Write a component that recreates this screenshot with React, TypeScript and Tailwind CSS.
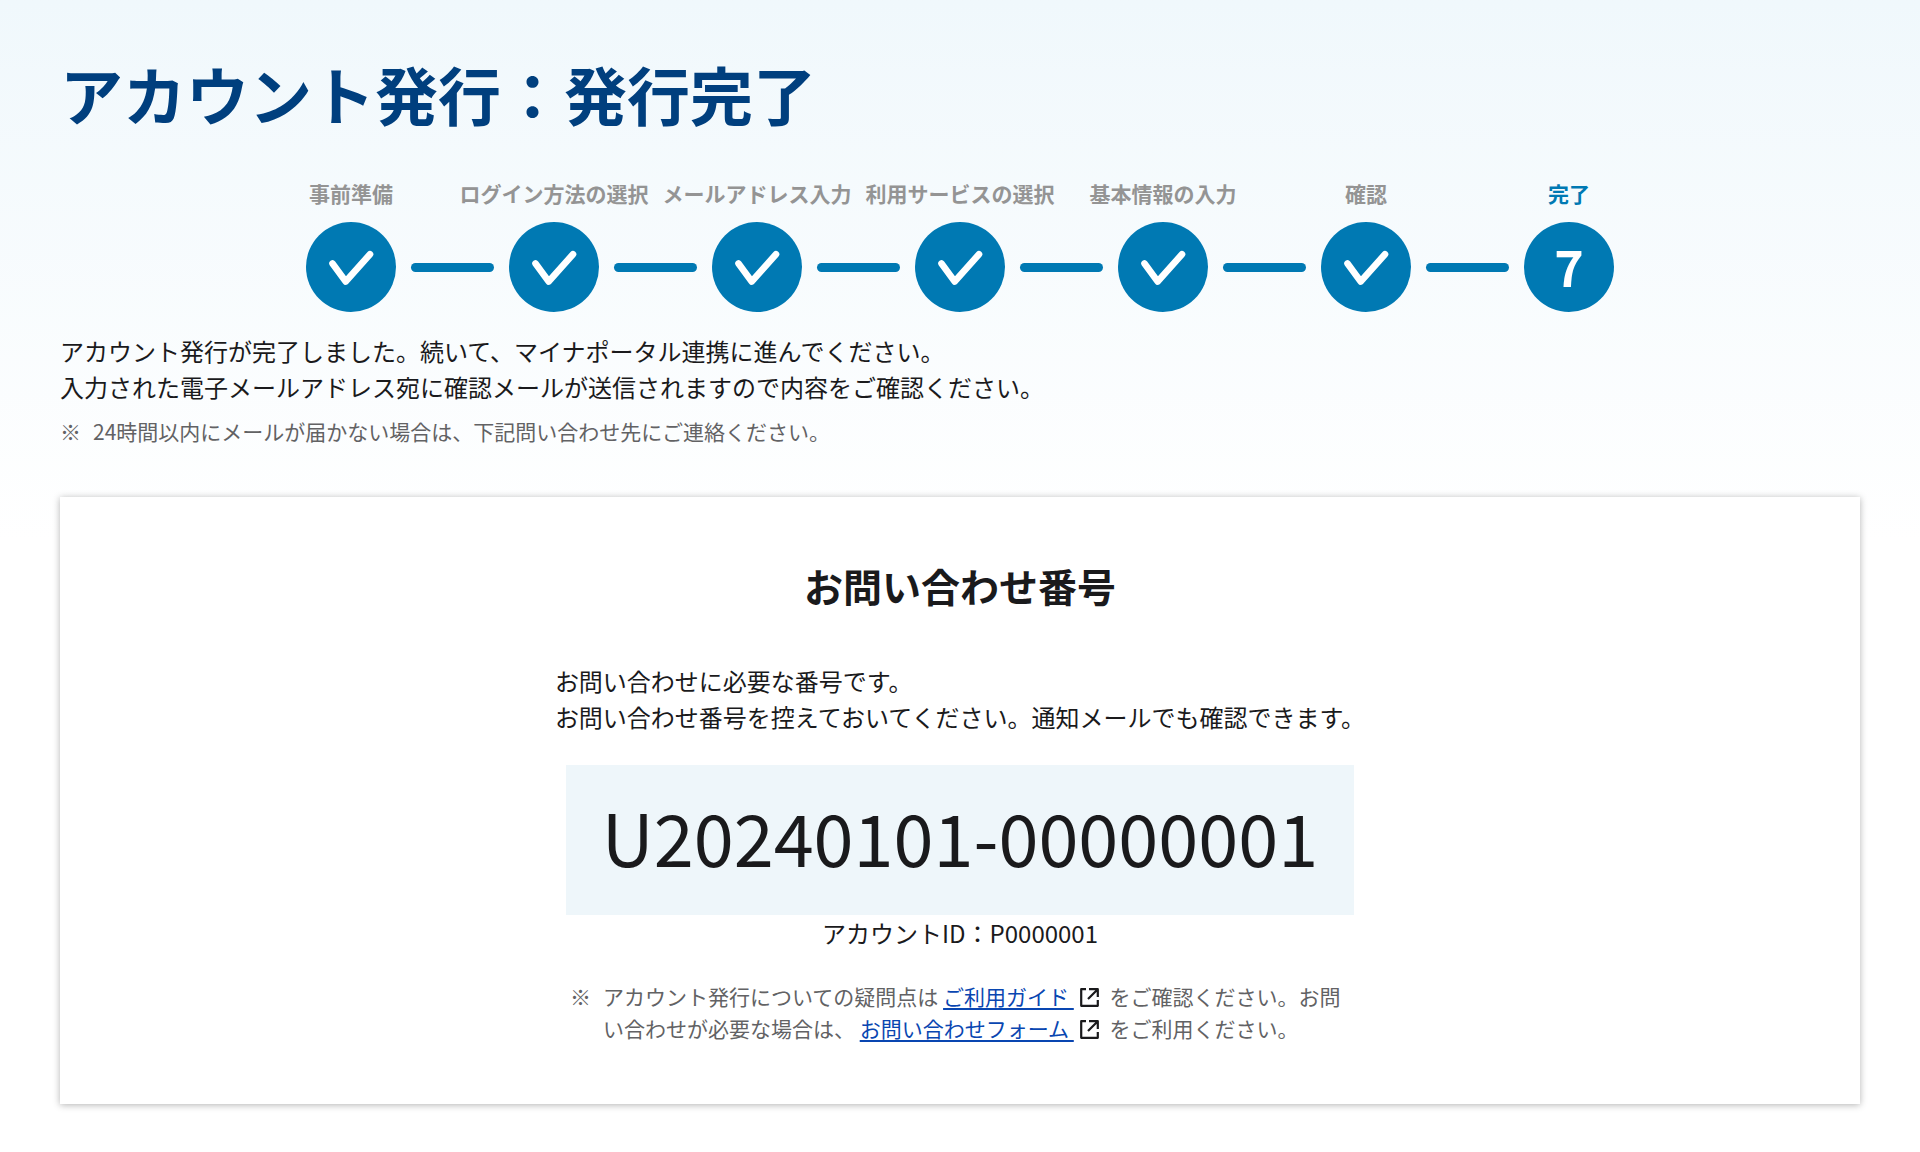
const steps = [
  "事前準備",
  "ログイン方法の選択",
  "メールアドレス入力",
  "利用サービスの選択",
  "基本情報の入力",
  "確認",
  "完了",
];

function CheckIcon() {
  return (
    <svg width="48" height="48" viewBox="0 0 48 48" fill="none" aria-hidden="true">
      <path d="M5.5 20.5L18.7 38.5L43 11.2" stroke="white" strokeWidth="6.6" strokeLinecap="round" strokeLinejoin="round" />
    </svg>
  );
}

function ExternalIcon() {
  return (
    <svg className="mx-1.5 inline-block align-[-2px]" width="19" height="19" viewBox="0 0 19 19" fill="none" stroke="#1a1a1c" strokeWidth="2.2" strokeLinejoin="round" aria-hidden="true">
      <path d="M6 1.2H1.2V17.8H17.8V12M9 1.2H17.8V9M17.8 1.2L8 11" />
    </svg>
  );
}

function NoteLink({ children }: { children: string }) {
  return (
    <>
      <a href="#" className="text-[#0946b1] underline decoration-2 underline-offset-3 whitespace-pre">
        {children + " "}
      </a>
      <ExternalIcon />
    </>
  );
}

export default function App() {
  const current = steps.length - 1;

  return (
    <main className="min-h-screen bg-white bg-linear-to-b from-[#f0f8fc] to-white to-[540px] px-15 pt-12 pb-12 font-['Noto_Sans_CJK_JP',sans-serif] text-[#1a1a1c]">
      <h1 className="text-[63px] leading-[90px] font-bold text-[#003f7e]">アカウント発行：発行完了</h1>

      <ol className="mt-10 flex justify-center gap-[113px]">
        {steps.map((label, i) => (
          <li key={label} className="flex w-[90px] flex-col items-center">
            <span
              className={`text-[21px] leading-[30px] font-bold whitespace-nowrap ${i === current ? "text-[#0079b3]" : "text-[#949494]"}`}
            >
              {label}
            </span>
            <div className="relative mt-3.5 flex size-[90px] items-center justify-center rounded-full bg-[#0079b3] text-white">
              {i === current ? (
                <span className="pb-1 text-[50px] leading-none font-bold">{i + 1}</span>
              ) : (
                <>
                  <CheckIcon />
                  <span className="absolute left-full ml-[15px] h-[9px] w-[83px] rounded-full bg-[#0079b3]" />
                </>
              )}
            </div>
          </li>
        ))}
      </ol>

      <p className="mt-[21px] text-2xl leading-9">
        アカウント発行が完了しました。続いて、マイナポータル連携に進んでください。
        <br />
        入力された電子メールアドレス宛に確認メールが送信されますので内容をご確認ください。
      </p>
      <p className="mt-2.5 flex gap-3 text-[21px] leading-8 text-[#626264]">
        <span>※</span>
        <span>24時間以内にメールが届かない場合は、下記問い合わせ先にご連絡ください。</span>
      </p>

      <section className="mt-[50px] flex flex-col items-center bg-white pt-[58px] pb-[60px] shadow-[0_1px_7px_rgba(0,0,0,0.3)]">
        <h2 className="text-[39px] leading-[60px] font-bold">お問い合わせ番号</h2>
        <p className="mt-12 text-2xl leading-9">
          お問い合わせに必要な番号です。
          <br />
          お問い合わせ番号を控えておいてください。通知メールでも確認できます。
        </p>
        <p className="mt-[30px] bg-[#eef6fa] px-9 pb-2 text-[72px] leading-[142px]">U20240101-00000001</p>
        <p className="text-2xl leading-9">アカウントID：P0000001</p>
        <p className="mt-[29px] flex w-full max-w-[780px] gap-3 text-[21px] leading-8 text-[#626264]">
          <span>※</span>
          <span>
            アカウント発行についての疑問点は <NoteLink>ご利用ガイド</NoteLink> をご確認ください。お問い合わせが必要な場合は、 <NoteLink>お問い合わせフォーム</NoteLink> をご利用ください。
          </span>
        </p>
      </section>
    </main>
  );
}
